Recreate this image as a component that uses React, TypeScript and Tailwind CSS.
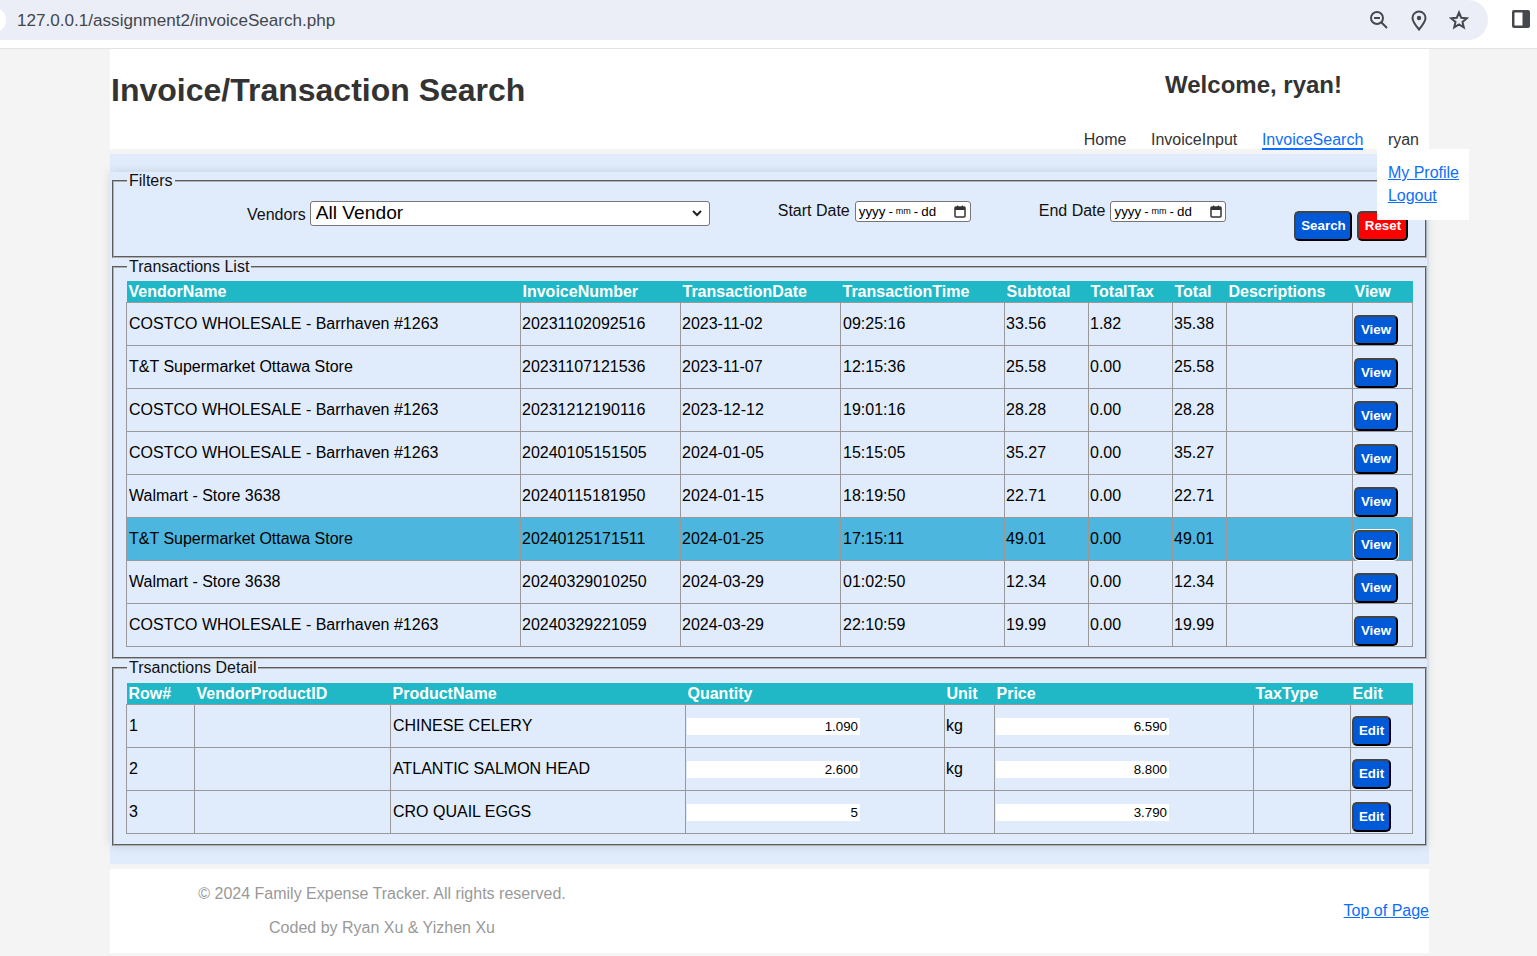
type Transaction = {
  vendor: string;
  invoice: string;
  date: string;
  time: string;
  subtotal: string;
  tax: string;
  total: string;
};

const transactions: Transaction[] = [
  { vendor: 'COSTCO WHOLESALE - Barrhaven #1263', invoice: '20231102092516', date: '2023-11-02', time: '09:25:16', subtotal: '33.56', tax: '1.82', total: '35.38' },
  { vendor: 'T&T Supermarket Ottawa Store', invoice: '20231107121536', date: '2023-11-07', time: '12:15:36', subtotal: '25.58', tax: '0.00', total: '25.58' },
  { vendor: 'COSTCO WHOLESALE - Barrhaven #1263', invoice: '20231212190116', date: '2023-12-12', time: '19:01:16', subtotal: '28.28', tax: '0.00', total: '28.28' },
  { vendor: 'COSTCO WHOLESALE - Barrhaven #1263', invoice: '20240105151505', date: '2024-01-05', time: '15:15:05', subtotal: '35.27', tax: '0.00', total: '35.27' },
  { vendor: 'Walmart - Store 3638', invoice: '20240115181950', date: '2024-01-15', time: '18:19:50', subtotal: '22.71', tax: '0.00', total: '22.71' },
  { vendor: 'T&T Supermarket Ottawa Store', invoice: '20240125171511', date: '2024-01-25', time: '17:15:11', subtotal: '49.01', tax: '0.00', total: '49.01' },
  { vendor: 'Walmart - Store 3638', invoice: '20240329010250', date: '2024-03-29', time: '01:02:50', subtotal: '12.34', tax: '0.00', total: '12.34' },
  { vendor: 'COSTCO WHOLESALE - Barrhaven #1263', invoice: '20240329221059', date: '2024-03-29', time: '22:10:59', subtotal: '19.99', tax: '0.00', total: '19.99' },
];

const details = [
  { row: '1', name: 'CHINESE CELERY', qty: '1.090', unit: 'kg', price: '6.590' },
  { row: '2', name: 'ATLANTIC SALMON HEAD', qty: '2.600', unit: 'kg', price: '8.800' },
  { row: '3', name: 'CRO QUAIL EGGS', qty: '5', unit: '', price: '3.790' },
];

const thClass = 'pl-[2px] text-left font-bold text-white leading-[21px] h-[21px]';
const tdBase = 'border border-[#999] pb-[1px] align-middle text-black';
const tdClass = `${tdBase} pl-[1px]`;
const tdWide = `${tdBase} pl-[2px]`;
const fieldsetClass = 'border-2 [border-style:groove] border-[#b0b0b0]';
const btnClass = 'h-[30px] rounded-[5px] border-2 [border-style:outset] border-[#444] text-[13.33px] font-bold text-white';

function Group({ title, children, className }: { title: string; children: React.ReactNode; className: string }) {
  return (
    <fieldset className={`${fieldsetClass} ${className}`}>
      <legend className="ml-[13px] px-[2px] leading-[18px] text-[#111]">{title}</legend>
      {children}
    </fieldset>
  );
}

function AmountInput({ value }: { value: string }) {
  return (
    <input
      readOnly
      value={value}
      className="block h-[17px] w-[173px] bg-white pr-[2px] text-right text-[13.33px] leading-[17px] text-black"
    />
  );
}

// Stands in for a native date input, which would follow the browser's locale
function DateBox({ className }: { className: string }) {
  return (
    <div className={`${className} flex h-[21px] w-[116px] items-center rounded-[3px] border border-[#767676] bg-white pl-[3px] text-[13.33px] text-black`}>
      <span>yyyy</span>
      <span className="ml-[3px]">-</span>
      <span className="ml-[3px] text-[9px]">mm</span>
      <span className="ml-[3px]">-</span>
      <span className="ml-[3px]">dd</span>
      <svg width="12" height="13" viewBox="0 0 12 13" className="ml-[18px]" fill="none">
        <rect x="1" y="2" width="10" height="10" rx="1" stroke="#333" strokeWidth="1.500" />
        <rect x="1" y="2" width="10" height="3" fill="#333" />
        <path d="M3.500 0.500v2M8.500 0.500v2" stroke="#333" strokeWidth="1.200" />
      </svg>
    </div>
  );
}

export default function App() {
  return (
    <div className="h-[956px] overflow-hidden bg-[#f4f4f4] font-['Liberation_Sans',Arial,sans-serif] text-[16px] text-[#333]">
      {/* Browser toolbar */}
      <div className="relative flex h-[49px] overflow-hidden border-b border-[#e3e3e3] bg-white">
        <div className="flex h-[40px] w-[1488px] items-center rounded-r-[20px] bg-[#ebeef7] pl-[17px] pr-[19px]">
          <span className="flex-1 pt-[1px] text-[17.1px] text-[#44474a]">127.0.0.1/assignment2/invoiceSearch.php</span>
          <svg width="20" height="20" viewBox="0 0 20 20" fill="none" stroke="#45484c" strokeWidth="2" className="mr-[20px]">
            <circle cx="8" cy="8" r="6" />
            <path d="M5 8h6M12.500 12.500 18 18" />
          </svg>
          <svg width="20" height="22" viewBox="0 0 20 22" fill="none" stroke="#45484c" strokeWidth="2" className="mr-[20px]">
            <path d="M10 20.500c-3.800-4.500-6.500-8-6.500-11.500a6.500 6.500 0 0 1 13 0c0 3.500-2.700 7-6.500 11.500Z" />
            <circle cx="10" cy="9" r="2.200" fill="#45484c" stroke="none" />
          </svg>
          <svg width="20" height="20" viewBox="0 0 20 20" fill="none" stroke="#45484c" strokeWidth="2">
            <polygon points="10,2.500 12.200,7.700 17.800,8.200 13.500,11.900 14.800,17.400 10,14.500 5.200,17.400 6.500,11.900 2.200,8.200 7.800,7.700" />
          </svg>
        </div>
        <svg width="18" height="18" viewBox="0 0 18 18" className="ml-[24px] mt-[10px]">
          <rect width="18" height="18" rx="2" fill="#45484c" />
          <rect x="2.500" y="2.500" width="8" height="13" fill="#fff" />
        </svg>
        <div className="absolute left-[-20px] top-[7px] h-[26px] w-[26px] rounded-full bg-white" />
      </div>

      <div className="mx-[110px] w-[1319px]">
        {/* Page header */}
        <header className="flex h-[100px] justify-between bg-white">
          <h1 className="mt-[21px] pl-[1px] text-[32px] font-bold leading-[40px]">Invoice/Transaction Search</h1>
          <div className="flex flex-col items-end pr-[10px]">
            <p className="mr-[77px] mt-[22px] text-[24px] font-bold leading-[28px]">Welcome, ryan!</p>
            <nav className="mt-[30px] flex gap-[24.6px] leading-[22px]">
              <span>Home</span>
              <span>InvoiceInput</span>
              <a href="#" className="h-[21px] border-b-2 border-[#0d6efd] text-[#0d6efd]">InvoiceSearch</a>
              <div className="relative">
                <span>ryan</span>
                <div className="absolute left-[-11px] top-[20px] z-10 h-[71px] w-[92px] whitespace-nowrap bg-white px-[11px] pt-[12px] leading-[23px]">
                  <a href="#" className="block text-[#0d6efd] underline">My Profile</a>
                  <a href="#" className="block text-[#0d6efd] underline">Logout</a>
                </div>
              </div>
            </nav>
          </div>
        </header>

        {/* Main panel */}
        <main className="mt-[5px] bg-[#e0ecfb] py-[18px]">
          <div className="mr-[2px] bg-[#e0ecfb] shadow-[0_0_10px_rgba(0,0,0,0.12)]">
            <Group title="Filters" className="ml-[2px] h-[86px]">
              <div className="flex pl-[133px] pt-[11px]">
                <label className="mt-[5px] leading-[18px] text-[#111]">Vendors</label>
                <div className="relative ml-[4px] h-[25px] w-[400px]">
                  <select className="h-[25px] w-full appearance-none rounded-[3px] border border-[#767676] bg-white pb-[1px] pl-[5px] text-[19.2px] leading-[20px] text-black">
                    <option>All Vendor</option>
                  </select>
                  <svg width="10" height="7" viewBox="0 0 10 7" fill="none" stroke="#222" strokeWidth="2" className="pointer-events-none absolute left-[382px] top-[9px]">
                    <path d="M1 1l4 4 4-4" />
                  </svg>
                </div>
                <label className="ml-[68px] mt-[1px] leading-[18px] text-[#111]">Start Date</label>
                <DateBox className="ml-[5px]" />
                <label className="ml-[68px] mt-[1px] leading-[18px] text-[#111]">End Date</label>
                <DateBox className="ml-[5px]" />
                <button className={`${btnClass} ml-[68px] mt-[10px] w-[58px] bg-[#0059d6]`}>Search</button>
                <button className={`${btnClass} ml-[5px] mt-[10px] w-[51px] bg-[#ff0000]`}>Reset</button>
              </div>
            </Group>

            <Group title="Transactions List" className="ml-[2px] h-[401px]">
              <table className="ml-[12px] mt-[5px] w-[1286px] table-fixed border-collapse">
                <colgroup>
                  <col className="w-[394px]" />
                  <col className="w-[160px]" />
                  <col className="w-[160px]" />
                  <col className="w-[164px]" />
                  <col className="w-[84px]" />
                  <col className="w-[84px]" />
                  <col className="w-[54px]" />
                  <col className="w-[126px]" />
                  <col className="w-[60px]" />
                </colgroup>
                <thead>
                  <tr className="bg-[#20b8c6]">
                    <th className={thClass}>VendorName</th>
                    <th className={thClass}>InvoiceNumber</th>
                    <th className={thClass}>TransactionDate</th>
                    <th className={thClass}>TransactionTime</th>
                    <th className={thClass}>Subtotal</th>
                    <th className={thClass}>TotalTax</th>
                    <th className={thClass}>Total</th>
                    <th className={thClass}>Descriptions</th>
                    <th className={thClass}>View</th>
                  </tr>
                </thead>
                <tbody>
                  {transactions.map((t, i) => (
                    <tr key={t.invoice} className={`h-[43px] ${i === 5 ? 'bg-[#4db6de]' : ''}`}>
                      <td className={tdWide}>{t.vendor}</td>
                      <td className={tdClass}>{t.invoice}</td>
                      <td className={tdClass}>{t.date}</td>
                      <td className={tdWide}>{t.time}</td>
                      <td className={tdClass}>{t.subtotal}</td>
                      <td className={tdClass}>{t.tax}</td>
                      <td className={tdClass}>{t.total}</td>
                      <td className={tdClass}></td>
                      <td className="border border-[#999] pl-[1px] pt-[11px] align-middle">
                        <button className={`${btnClass} block w-[44px] bg-[#0059d6] ${i === 5 ? 'outline outline-1 outline-white' : ''}`}>View</button>
                      </td>
                    </tr>
                  ))}
                </tbody>
              </table>
            </Group>

            <Group title="Trsanctions Detail" className="ml-[2px] h-[187px]">
              <table className="ml-[12px] mt-[6px] w-[1286px] table-fixed border-collapse">
                <colgroup>
                  <col className="w-[68px]" />
                  <col className="w-[196px]" />
                  <col className="w-[295px]" />
                  <col className="w-[259px]" />
                  <col className="w-[50px]" />
                  <col className="w-[259px]" />
                  <col className="w-[97px]" />
                  <col className="w-[62px]" />
                </colgroup>
                <thead>
                  <tr className="bg-[#20b8c6]">
                    <th className={thClass}>Row#</th>
                    <th className={thClass}>VendorProductID</th>
                    <th className={thClass}>ProductName</th>
                    <th className={thClass}>Quantity</th>
                    <th className={thClass}>Unit</th>
                    <th className={thClass}>Price</th>
                    <th className={thClass}>TaxType</th>
                    <th className={thClass}>Edit</th>
                  </tr>
                </thead>
                <tbody>
                  {details.map(d => (
                    <tr key={d.row} className="h-[43px]">
                      <td className={tdWide}>{d.row}</td>
                      <td className={tdClass}></td>
                      <td className={tdWide}>{d.name}</td>
                      <td className="border border-[#999] pl-[1px] align-middle">
                        <AmountInput value={d.qty} />
                      </td>
                      <td className={tdClass}>{d.unit}</td>
                      <td className="border border-[#999] pl-[1px] align-middle">
                        <AmountInput value={d.price} />
                      </td>
                      <td className={tdClass}></td>
                      <td className="border border-[#999] pl-[1px] pt-[9px] align-middle">
                        <button className={`${btnClass} block w-[39px] bg-[#0059d6]`}>Edit</button>
                      </td>
                    </tr>
                  ))}
                </tbody>
              </table>
            </Group>
          </div>
        </main>

        {/* Footer */}
        <footer className="mt-[5px] flex h-[84px] items-center justify-between bg-white">
          <div className="w-[544px] text-center text-[#999] leading-[18px]">
            <p>© 2024 Family Expense Tracker. All rights reserved.</p>
            <p className="mt-[16px]">Coded by Ryan Xu &amp; Yizhen Xu</p>
          </div>
          <a href="#" className="text-[#0d6efd] underline">Top of Page</a>
        </footer>
      </div>
    </div>
  );
}
